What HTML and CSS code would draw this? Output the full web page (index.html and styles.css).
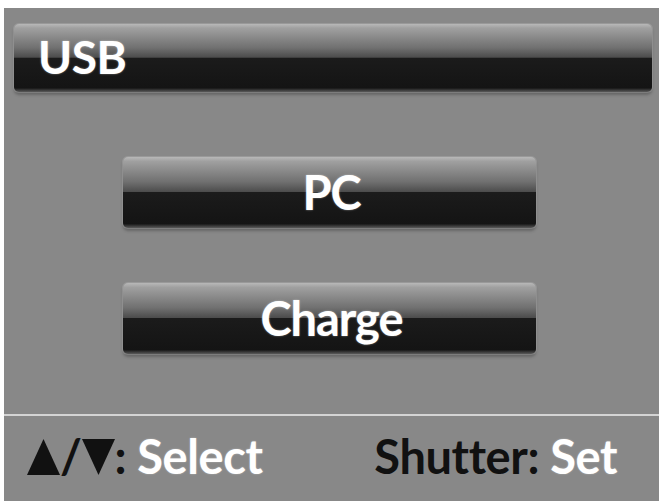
FILE: index.html
```html
<!DOCTYPE html>
<html lang="en">
<head>
  <meta charset="UTF-8" />
  <meta name="viewport" content="width=device-width, initial-scale=1.0"/>
  <title>USB Mode</title>
  <link rel="stylesheet" href="styles.css">
</head>
<body>

  <div class="screen">
    <div class="title-bar">USB</div>

    <div class="options">
      <div class="option">PC</div>
      <div class="option">Charge</div>
    </div>

    <div class="hints">
      <span class="hint">
        <span class="key">
          <svg class="arrow" viewBox="0 0 33 36"><polygon points="16.5,0 33,36 0,36" /></svg>/<svg class="arrow" viewBox="0 0 33 36"><polygon points="0,0 33,0 16.5,36" /></svg>:
        </span>
        Select
      </span>
      <span class="hint"><span class="key">Shutter:</span> Set</span>
    </div>
  </div>

</body>
</html>
```

FILE: styles.css
```css
html, body {
  margin: 0;
  height: 100%;
}

body {
  background-color: white;
  font-family: Lato, "Open Sans", sans-serif;
  font-weight: bold;
  padding: 8px 0 0 4px;
  box-sizing: border-box;
}

.screen {
  height: 100%;
  background-color: #888;
  display: flex;
  flex-direction: column;
}

/* glossy black bar used by the title and the menu entries */
.title-bar,
.option {
  color: white;
  line-height: 1;
  display: flex;
  align-items: center;
  border-radius: 5px;
  background: linear-gradient(to bottom,
    #b8b8b8 0, #a0a0a0 6%, #707070 35%, #4c4c4c 49%,
    #1b1b1b 50%, #141414 94%, #5a5a5a 100%);
  box-shadow: 0 0 0 1px rgba(255, 255, 255, 0.15), 0 3px 3px rgba(0, 0, 0, 0.25);
  text-shadow: 0 0 2px rgba(255, 255, 255, 0.5);
}

.title-bar {
  height: 68px;
  margin: 16px 7px 0 10px;
  padding-left: 24px;
  padding-bottom: 3px;
  box-sizing: border-box;
  font-size: 46px;
  letter-spacing: -0.5px;
}

.options {
  display: flex;
  flex-direction: column;
  align-items: center;
  gap: 55px;
  padding-top: 65px;
  padding-right: 4px;
}

.option {
  width: 413px;
  height: 71px;
  justify-content: center;
  padding-left: 4px;
  box-sizing: border-box;
  font-size: 47px;
  letter-spacing: -1px;
}

.hints {
  margin-top: auto;
  height: 81px;
  border-top: 2px solid #d4d4d4;
  display: flex;
  justify-content: space-between;
  align-items: center;
  padding: 0 42px 4px 23px;
  font-size: 47px;
  letter-spacing: -0.4px;
  line-height: 1;
  color: white;
  text-shadow: 0 0 2px rgba(255, 255, 255, 0.4);
}

.key {
  color: #111;
  text-shadow: none;
}

.arrow {
  width: 33px;
  height: 36px;
  fill: #111;
  vertical-align: -1px;
}
```
